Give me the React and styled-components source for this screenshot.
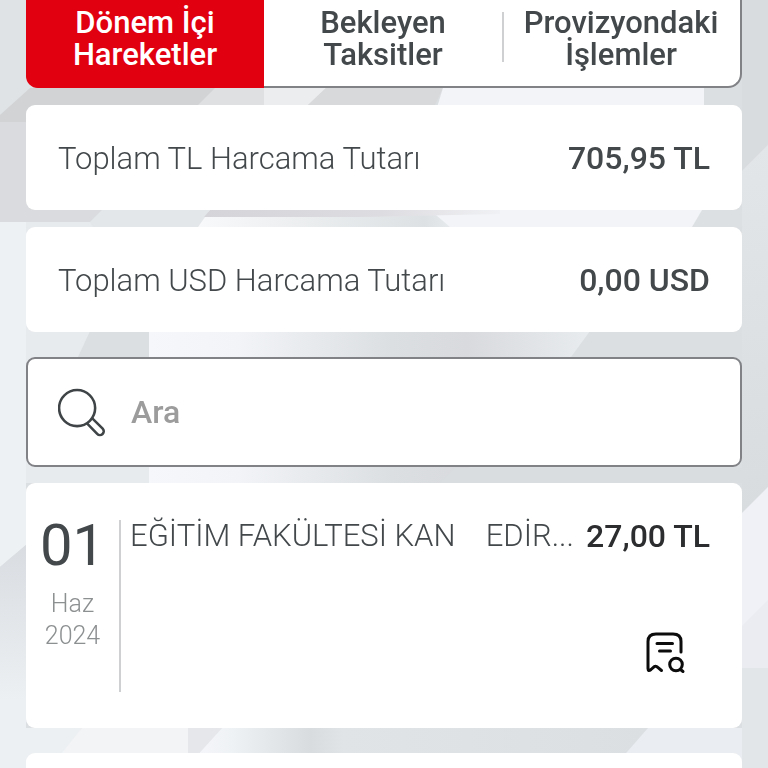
import React from "react";
import styled, { createGlobalStyle } from "styled-components";

const GlobalStyle = createGlobalStyle`
  * {
    box-sizing: border-box;
  }

  body {
    margin: 0;
    background: #dcdfe2;
    color: #43484b;
    font-family: Roboto, "Liberation Sans", sans-serif;
  }
`;

const Page = styled.div`
  height: 100vh;
  padding: 0 26px;
  overflow: hidden;
`;

const Backdrop = styled.svg`
  position: fixed;
  inset: 0;
  z-index: -1;
  width: 100%;
  height: 100%;
`;

const Tabs = styled.nav`
  display: flex;
  margin-bottom: 17px;
  background: #ffffff;
  border: 2px solid #808286;
  border-width: 0 2px 2px 0;
  border-radius: 0 0 14px 14px;
`;

const Tab = styled.button`
  position: relative;
  flex: 1;
  margin: ${(props) => (props.$active ? "0 0 -2px" : "0")};
  padding: ${(props) => (props.$active ? "7px 8px 17px" : "7px 8px 15px")};
  border: 0;
  border-radius: ${(props) => (props.$active ? "0 0 0 12px" : "0")};
  background: ${(props) => (props.$active ? "#e1000f" : "transparent")};
  color: ${(props) => (props.$active ? "#ffffff" : "#43484b")};
  font-family: inherit;
  font-weight: 500;
  font-size: 31px;
  line-height: 32px;
  text-align: center;

  &:last-child::before {
    content: "";
    position: absolute;
    top: 12px;
    bottom: 24px;
    left: 0;
    width: 2px;
    background: #cfd0d2;
  }
`;

const Card = styled.section`
  background: #ffffff;
  border-radius: 9px;
`;

const Total = styled(Card)`
  display: flex;
  align-items: center;
  justify-content: space-between;
  margin-bottom: 17px;
  padding: 35px 32px 33px;
  font-size: 32px;
  line-height: 37px;
`;

const Label = styled.span`
  font-weight: 300;
  font-size: 31px;
`;

const Amount = styled.span`
  flex: none;
  color: ${(props) => (props.$dark ? "#2b2d2f" : "#43484b")};
  font-weight: 500;
`;

const SearchBox = styled.label`
  display: flex;
  align-items: center;
  gap: 24px;
  height: 110px;
  margin: 25px 0 16px;
  padding: 0 30px;
  background: #ffffff;
  border: 2px solid #808286;
  border-radius: 9px;
`;

const SearchInput = styled.input`
  flex: 1;
  min-width: 0;
  padding: 0;
  border: 0;
  outline: 0;
  background: transparent;
  color: #43484b;
  font-family: inherit;
  font-weight: 500;
  font-size: 32px;
  line-height: 40px;

  &::placeholder {
    color: #9c9c9c;
    opacity: 1;
  }
`;

const Transaction = styled(Card)`
  display: flex;
  min-height: 245px;
  margin-bottom: 25px;
  padding: 37px 32px 36px 16px;
`;

const DateColumn = styled.time`
  display: flex;
  flex: none;
  flex-direction: column;
  align-items: center;
  width: 79px;
  padding-right: 16px;
  border-right: 2px solid #cfd0d2;
  color: #8d9091;
  font-weight: 300;
  font-size: 25px;
  line-height: 32px;
`;

const Day = styled.span`
  margin-bottom: 18px;
  color: #43484b;
  font-weight: 400;
  font-size: 58px;
  line-height: 50px;
`;

const Detail = styled.div`
  display: flex;
  flex: 1;
  flex-direction: column;
  justify-content: space-between;
  min-width: 0;
  margin-top: -5px;
  padding-left: 9px;
`;

const Summary = styled.div`
  display: flex;
  justify-content: space-between;
  gap: 8px;
  font-size: 32px;
  line-height: 42px;
`;

const Merchant = styled.span`
  overflow: hidden;
  font-weight: 300;
  font-size: 31px;
  text-overflow: ellipsis;
  white-space: pre;
`;

const ReceiptButton = styled.button`
  align-self: flex-end;
  display: flex;
  margin: 0 24px 18px 0;
  padding: 0;
  border: 0;
  background: transparent;
  color: #0c0c0c;
`;

const totals = [
  { label: "Toplam TL Harcama Tutarı", amount: "705,95 TL" },
  { label: "Toplam USD Harcama Tutarı", amount: "0,00 USD" },
];

function Background() {
  return (
    <Backdrop viewBox="0 0 768 768" preserveAspectRatio="none" aria-hidden="true">
      <defs>
        <linearGradient id="sheen">
          <stop offset="0" stopColor="#f6f7fb" />
          <stop offset="0.2" stopColor="#f2f4f7" />
          <stop offset="0.55" stopColor="#dcdfe2" />
          <stop offset="0.72" stopColor="#d8dadd" />
          <stop offset="1" stopColor="#e9ecef" />
        </linearGradient>
        <linearGradient id="foot">
          <stop offset="0" stopColor="#f6f7fc" />
          <stop offset="0.1" stopColor="#eff2f5" />
          <stop offset="0.27" stopColor="#d9dcdf" />
          <stop offset="0.34" stopColor="#e0e4e7" />
          <stop offset="1" stopColor="#dcdfe2" />
        </linearGradient>
        <linearGradient id="upper">
          <stop offset="0" stopColor="#f8f9fa" />
          <stop offset="0.9" stopColor="#dde1e3" />
          <stop offset="1" stopColor="#e6eaec" />
        </linearGradient>
        <linearGradient id="edge">
          <stop offset="0" stopColor="#d5d5d9" />
          <stop offset="0.6" stopColor="#dddce0" />
          <stop offset="1" stopColor="#f0f1f4" />
        </linearGradient>
        <linearGradient id="left" x2="0" y2="1">
          <stop offset="0" stopColor="#d9dce0" />
          <stop offset="1" stopColor="#edf0f3" />
        </linearGradient>
        <linearGradient id="right" x2="0" y2="1">
          <stop offset="0" stopColor="#e3e6e9" />
          <stop offset="1" stopColor="#d9dcdf" />
        </linearGradient>
      </defs>
      <rect width="768" height="768" fill="#dcdfe2" />
      <path d="M0 0H143L0 115z" fill="#e0e3e5" />
      <path d="M0 115L30 88H220L180 122H0z" fill="#d1d3d5" />
      <path d="M215 88H264V105H198z" fill="#dfe0e2" />
      <path d="M264 88H326L308 105H264z" fill="#ecedef" />
      <path d="M326 88H443L435 105H308z" fill="#d8d9db" />
      <path d="M443 88H704V227H400z" fill="#f2f4f7" />
      <path d="M702 210L692 227H768V210z" fill="#dde0e3" />
      <path d="M0 122H102V210L90 222H0z" fill="#d9dbdf" />
      <path d="M102 210H212L198 227H85z" fill="#e4e7ea" />
      <path d="M210 210H430L450 227H198z" fill="url(#upper)" />
      <path d="M210 210H500V214L360 217H204z" fill="url(#edge)" />
      <path d="M0 222H90L149 331V483H26L0 567z" fill="#e8ebee" />
      <path d="M0 222H26V545L0 567z" fill="#edf1f4" />
      <path d="M90 331H149V357H78z" fill="#dcdfe1" />
      <path d="M149 331H590L571 357L455 483H149z" fill="url(#sheen)" />
      <path d="M455 468H768V483H440z" fill="#dadde0" />
      <path d="M0 567L26 545V700H0z" fill="url(#left)" />
      <path d="M0 700H26V728H82L60 768H0z" fill="#edf0f3" />
      <path d="M82 728H188V768H50z" fill="#f3f4f6" />
      <path d="M188 728H222L188 768z" fill="#e5e7eb" />
      <path d="M222 728H648L613 768H186z" fill="url(#foot)" />
      <path d="M648 728H768V768H613z" fill="#eaedf1" />
      <path d="M742 0H768V145L742 171z" fill="#d9dcdf" />
      <path d="M742 171L768 145V487L742 513z" fill="url(#right)" />
      <path d="M742 513L768 487V668H742z" fill="#f0f1f6" />
      <path d="M742 626L768 600V668H742z" fill="#eaecf1" />
      <path d="M742 668H768V768H742z" fill="#e3e6e9" />
    </Backdrop>
  );
}

function SearchIcon() {
  return (
    <svg width="49" height="49" viewBox="0 0 50 50" fill="none" stroke="#3f4446" strokeWidth="2.6" aria-hidden="true">
      <circle cx="19.5" cy="20.5" r="18.4" />
      <path d="M35 31L45.6 41.4A3.8 3.8 0 0 1 40 46.8L29.6 36.2" />
    </svg>
  );
}

function ReceiptIcon() {
  return (
    <svg
      width="40"
      height="42"
      viewBox="0 0 40 42"
      fill="none"
      stroke="currentColor"
      strokeWidth="3"
      strokeLinecap="round"
      strokeLinejoin="round"
      aria-hidden="true"
    >
      <path d="M35 20V9.500Q35 2 27 2H10Q2 2 2 9.500V36.500Q2 40 5 37.500L8 34.800Q10 33.500 11.800 35.400L15.500 38.500" />
      <path d="M11 11.500H26.500M13.500 19H24.500" />
      <circle cx="30" cy="32.500" r="6.300" />
      <path d="M34.500 37.500L37 39.500" />
    </svg>
  );
}

export default () => {
  return (
    <>
      <GlobalStyle />
      <Background />
      <Page>
        <Tabs>
          <Tab type="button" $active>
            Dönem İçi
            <br />
            Hareketler
          </Tab>
          <Tab type="button">
            Bekleyen
            <br />
            Taksitler
          </Tab>
          <Tab type="button">
            Provizyondaki
            <br />
            İşlemler
          </Tab>
        </Tabs>
        {totals.map((total) => (
          <Total key={total.label}>
            <Label>{total.label}</Label>
            <Amount>{total.amount}</Amount>
          </Total>
        ))}
        <SearchBox>
          <SearchIcon />
          <SearchInput type="search" placeholder="Ara" />
        </SearchBox>
        <Transaction>
          <DateColumn dateTime="2024-06-01">
            <Day>01</Day>
            <span>Haz</span>
            <span>2024</span>
          </DateColumn>
          <Detail>
            <Summary>
              <Merchant>{"EĞİTİM FAKÜLTESİ KAN    EDİR..."}</Merchant>
              <Amount $dark>27,00 TL</Amount>
            </Summary>
            <ReceiptButton type="button" aria-label="Dekont">
              <ReceiptIcon />
            </ReceiptButton>
          </Detail>
        </Transaction>
        <Transaction />
      </Page>
    </>
  );
};
